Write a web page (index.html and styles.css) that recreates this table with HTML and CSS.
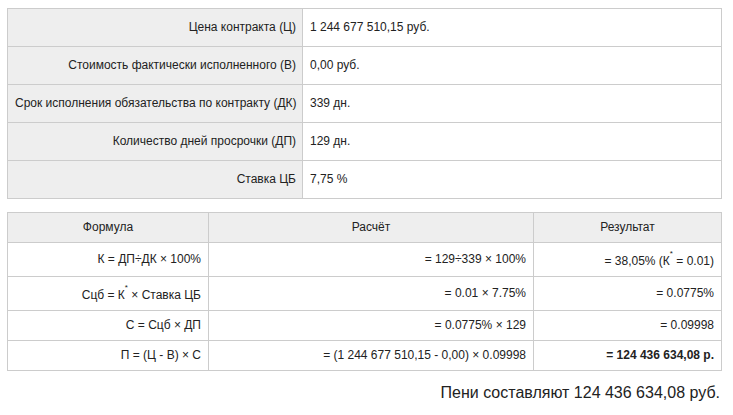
FILE: index.html
```html
<!DOCTYPE html>
<html lang="ru">
<head>
<meta charset="utf-8">
<link rel="stylesheet" href="styles.css">
</head>
<body>
<div class="page">
  <table class="params">
    <tr><th>Цена контракта (Ц)</th><td>1 244 677 510,15 руб.</td></tr>
    <tr><th>Стоимость фактически исполненного (В)</th><td>0,00 руб.</td></tr>
    <tr><th>Срок исполнения обязательства по контракту (ДК)</th><td>339 дн.</td></tr>
    <tr><th>Количество дней просрочки (ДП)</th><td>129 дн.</td></tr>
    <tr><th>Ставка ЦБ</th><td>7,75 %</td></tr>
  </table>

  <table class="calc">
    <thead>
      <tr><th class="c1">Формула</th><th class="c2">Расчёт</th><th class="c3">Результат</th></tr>
    </thead>
    <tbody>
      <tr><td>К = ДП÷ДК × 100%</td><td>= 129÷339 × 100%</td><td>= 38,05% (К<sup>*</sup> = 0.01)</td></tr>
      <tr><td>Сцб = К<sup>*</sup> × Ставка ЦБ</td><td>= 0.01 × 7.75%</td><td>= 0.0775%</td></tr>
      <tr><td>С = Сцб × ДП</td><td>= 0.0775% × 129</td><td>= 0.09998</td></tr>
      <tr><td>П = (Ц - В) × С</td><td>= (1 244 677 510,15 - 0,00) × 0.09998</td><td class="total">= 124 436 634,08 р.</td></tr>
    </tbody>
  </table>

  <p class="summary">Пени составляют 124 436 634,08 руб.</p>
</div>
</body>
</html>
```

FILE: styles.css
```css
html, body {
  margin: 0;
  padding: 0;
  background: #fff;
}

body {
  font-family: "Liberation Sans", Arial, sans-serif;
  font-size: 12px;
  color: #222;
}

.page {
  padding: 8px 11px 0 7px;
}

table {
  width: 100%;
  border-collapse: collapse;
  table-layout: fixed;
}

th, td {
  border: 1px solid #ccc;
  font-weight: normal;
  line-height: 15px;
  white-space: nowrap;
}

.params th,
.params td {
  padding: 11px 6px 11px 7px;
}

.params th {
  width: 295px;
  box-sizing: border-box;
  background: #eee;
  text-align: right;
  padding-right: 6px;
}

.params td {
  text-align: left;
}

.calc {
  margin-top: 13px;
}

.calc th {
  background: #eee;
  text-align: center;
  padding: 7px 6px;
}

.calc .c1 { width: 201px; box-sizing: border-box; }
.calc .c3 { width: 188px; box-sizing: border-box; }

.calc td {
  text-align: right;
  padding: 7px 7px 7px 6px;
}

.calc sup {
  font-size: 8px;
  line-height: 8px;
  vertical-align: 9px;
}

.calc .total {
  font-weight: bold;
}

.summary {
  margin: 13px 2px 0 0;
  text-align: right;
  font-size: 16px;
  line-height: 18px;
}
```
